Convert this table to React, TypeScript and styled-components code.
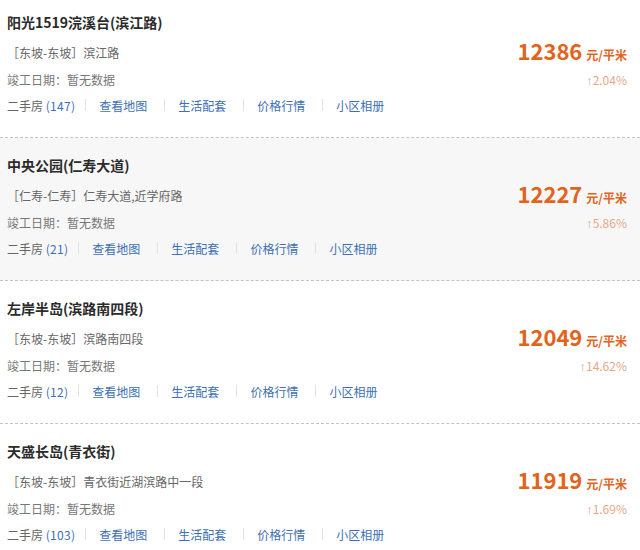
import React from "react";
import styled, { createGlobalStyle } from "styled-components";

const Global = createGlobalStyle`
  html, body { margin: 0; padding: 0; background: #fff; }
  body { font-family: "Noto Sans CJK SC", "Noto Sans", sans-serif; overflow: hidden; }
`;

const List = styled.div`
  margin-top: -5px;
  width: 640px;
`;

const Card = styled.div<{ $active?: boolean }>`
  display: flex;
  justify-content: space-between;
  height: 142px;
  padding: 0 13px 0 7px;
  box-sizing: content-box;
  background: ${(p) => (p.$active ? "#f7f7f7" : "#fff")};
  border-bottom: 1px dashed #c4c4c4;
`;

const Left = styled.div`
  display: flex;
  flex-direction: column;
  padding-top: 15px;
`;

const Title = styled.div`
  height: 24px;
  line-height: 24px;
  font-size: 14px;
  font-weight: 700;
  color: #2b2b2b;
`;

const Address = styled.div`
  margin-top: 7px;
  height: 24px;
  line-height: 24px;
  font-size: 12px;
  color: #666;
`;

const DateRow = styled.div`
  height: 28px;
  line-height: 30px;
  font-size: 12px;
  color: #777;
`;

const Links = styled.div`
  display: flex;
  align-items: center;
  height: 24px;
  font-size: 12px;
`;

const Item = styled.span<{ $first?: boolean }>`
  color: #3d70b3;
  margin-right: ${(p) => (p.$first ? "10px" : "17px")};
  white-space: nowrap;
`;

const Count = styled.span`
  letter-spacing: 0.3px;
`;

const Plain = styled.span`
  color: #666;
`;

const Sep = styled.span`
  display: inline-block;
  width: 1px;
  height: 12px;
  background: #e2e2e2;
  margin-right: 13px;
`;

const Right = styled.div`
  display: flex;
  flex-direction: column;
  align-items: flex-end;
  padding-top: 41px;
`;

const PriceRow = styled.div`
  display: flex;
  align-items: baseline;
  height: 28px;
  line-height: 28px;
  color: #e2631a;
  font-weight: 700;
`;

const Price = styled.span`
  font-size: 22px;
  margin-right: 4px;
`;

const Unit = styled.span`
  font-size: 12px;
`;

const Rise = styled.div`
  margin-top: 4px;
  height: 24px;
  line-height: 24px;
  font-size: 12px;
  color: #e8a78a;
`;

const Arrow = styled.span`
  font-family: "Liberation Sans", "DejaVu Sans", sans-serif;
  font-size: 13px;
`;

type Estate = {
  name: string;
  area: string;
  road: string;
  count: number;
  price: number;
  rise: string;
  active?: boolean;
};

const data: Estate[] = [
  { name: "阳光1519浣溪台(滨江路)", area: "东坡-东坡", road: "滨江路", count: 147, price: 12386, rise: "2.04%" },
  { name: "中央公园(仁寿大道)", area: "仁寿-仁寿", road: "仁寿大道,近学府路", count: 21, price: 12227, rise: "5.86%", active: true },
  { name: "左岸半岛(滨路南四段)", area: "东坡-东坡", road: "滨路南四段", count: 12, price: 12049, rise: "14.62%" },
  { name: "天盛长岛(青衣街)", area: "东坡-东坡", road: "青衣街近湖滨路中一段", count: 103, price: 11919, rise: "1.69%" },
];

const links = ["查看地图", "生活配套", "价格行情", "小区相册"];

export default function App() {
  return (
    <>
      <Global />
      <List>
        {data.map((d) => (
          <Card key={d.name} $active={d.active}>
            <Left>
              <Title>{d.name}</Title>
              <Address>［{d.area}］{d.road}</Address>
              <DateRow>竣工日期：暂无数据</DateRow>
              <Links>
                <Item $first>
                  <Plain>二手房 </Plain>
                  <Count>({d.count})</Count>
                </Item>
                {links.map((l) => (
                  <React.Fragment key={l}>
                    <Sep />
                    <Item>{l}</Item>
                  </React.Fragment>
                ))}
              </Links>
            </Left>
            <Right>
              <PriceRow>
                <Price>{d.price}</Price>
                <Unit>元/平米</Unit>
              </PriceRow>
              <Rise>
                <Arrow>↑</Arrow>
                {d.rise}
              </Rise>
            </Right>
          </Card>
        ))}
      </List>
    </>
  );
}
